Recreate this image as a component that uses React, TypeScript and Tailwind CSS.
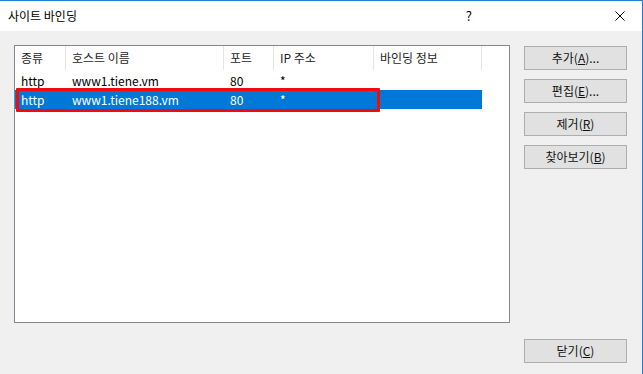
import React from 'react';

const font = { fontFamily: '"Noto Sans CJK KR", "Noto Sans", sans-serif' };

const columns = [
  { label: '종류', w: 'w-[51px]' },
  { label: '호스트 이름', w: 'w-[158px]' },
  { label: '포트', w: 'w-[50px]' },
  { label: 'IP 주소', w: 'w-[100px]' },
  { label: '바인딩 정보', w: 'w-[108px]' },
];

const rows = [
  { cells: ['http', 'www1.tiene.vm', '80', '*', ''], selected: false },
  { cells: ['http', 'www1.tiene188.vm', '80', '*', ''], selected: true },
];

function DlgButton({ children, className = '' }: { children: React.ReactNode; className?: string }) {
  return (
    <div className={`w-[103px] h-[24px] bg-[#e1e1e1] border border-[#adadad] flex items-center justify-center text-[12px] text-[#111] ${className}`}>
      {children}
    </div>
  );
}

export default function App() {
  return (
    <div className="w-[643px] h-[374px] flex flex-col border-t border-r border-[#1a80d6] bg-[#f0f0f0] overflow-hidden" style={font}>
      {/* title bar */}
      <div className="h-[30px] bg-white flex items-center shrink-0">
        <span className="pl-[8px] text-[12px] text-black">사이트 바인딩</span>
        <span className="ml-auto mr-[143px] text-[13px] text-black">?</span>
        <svg width="10" height="10" viewBox="0 0 10 10" className="mr-[17px]">
          <path d="M0.5 0.5 L9.5 9.5 M9.5 0.5 L0.5 9.5" stroke="#000" strokeWidth="1" />
        </svg>
      </div>

      <div className="flex-1 flex pt-[14px] pl-[14px] pb-[11px]">
        {/* list */}
        <div className="relative w-[496px] h-[278px] bg-white border border-[#828790] text-[12px]">
          <div className="flex h-[24px]">
            {columns.map((c, i) => (
              <div key={i} className={`${c.w} h-full flex items-center pl-[6px] border-r border-[#e5e5e5] text-[#1e1e1e]`}>
                {c.label}
              </div>
            ))}
          </div>
          <div className="pt-[1px]">
            {rows.map((r, ri) => (
              <div key={ri} className={`flex h-[19px] w-[467px] ${r.selected ? 'bg-[#0078d7] text-white' : 'text-black'}`}>
                {r.cells.map((cell, ci) => (
                  <div key={ci} className={`${columns[ci].w} flex items-center pl-[6px]`}>
                    {cell}
                  </div>
                ))}
              </div>
            ))}
          </div>
          {/* highlight box */}
          <div className="absolute left-[1px] top-[42px] w-[364px] h-[24px] border-[3px] border-[#f40a0a] rounded-[1px]" />
        </div>

        {/* buttons */}
        <div className="ml-[14px] flex flex-col gap-[9px] pt-[1px]">
          <DlgButton>추가(<span className="underline">A</span>)...</DlgButton>
          <DlgButton>편집(<span className="underline">E</span>)...</DlgButton>
          <DlgButton>제거(<span className="underline">R</span>)</DlgButton>
          <DlgButton>찾아보기(<span className="underline">B</span>)</DlgButton>
          <DlgButton className="mt-auto">닫기(<span className="underline">C</span>)</DlgButton>
        </div>
      </div>
    </div>
  );
}
